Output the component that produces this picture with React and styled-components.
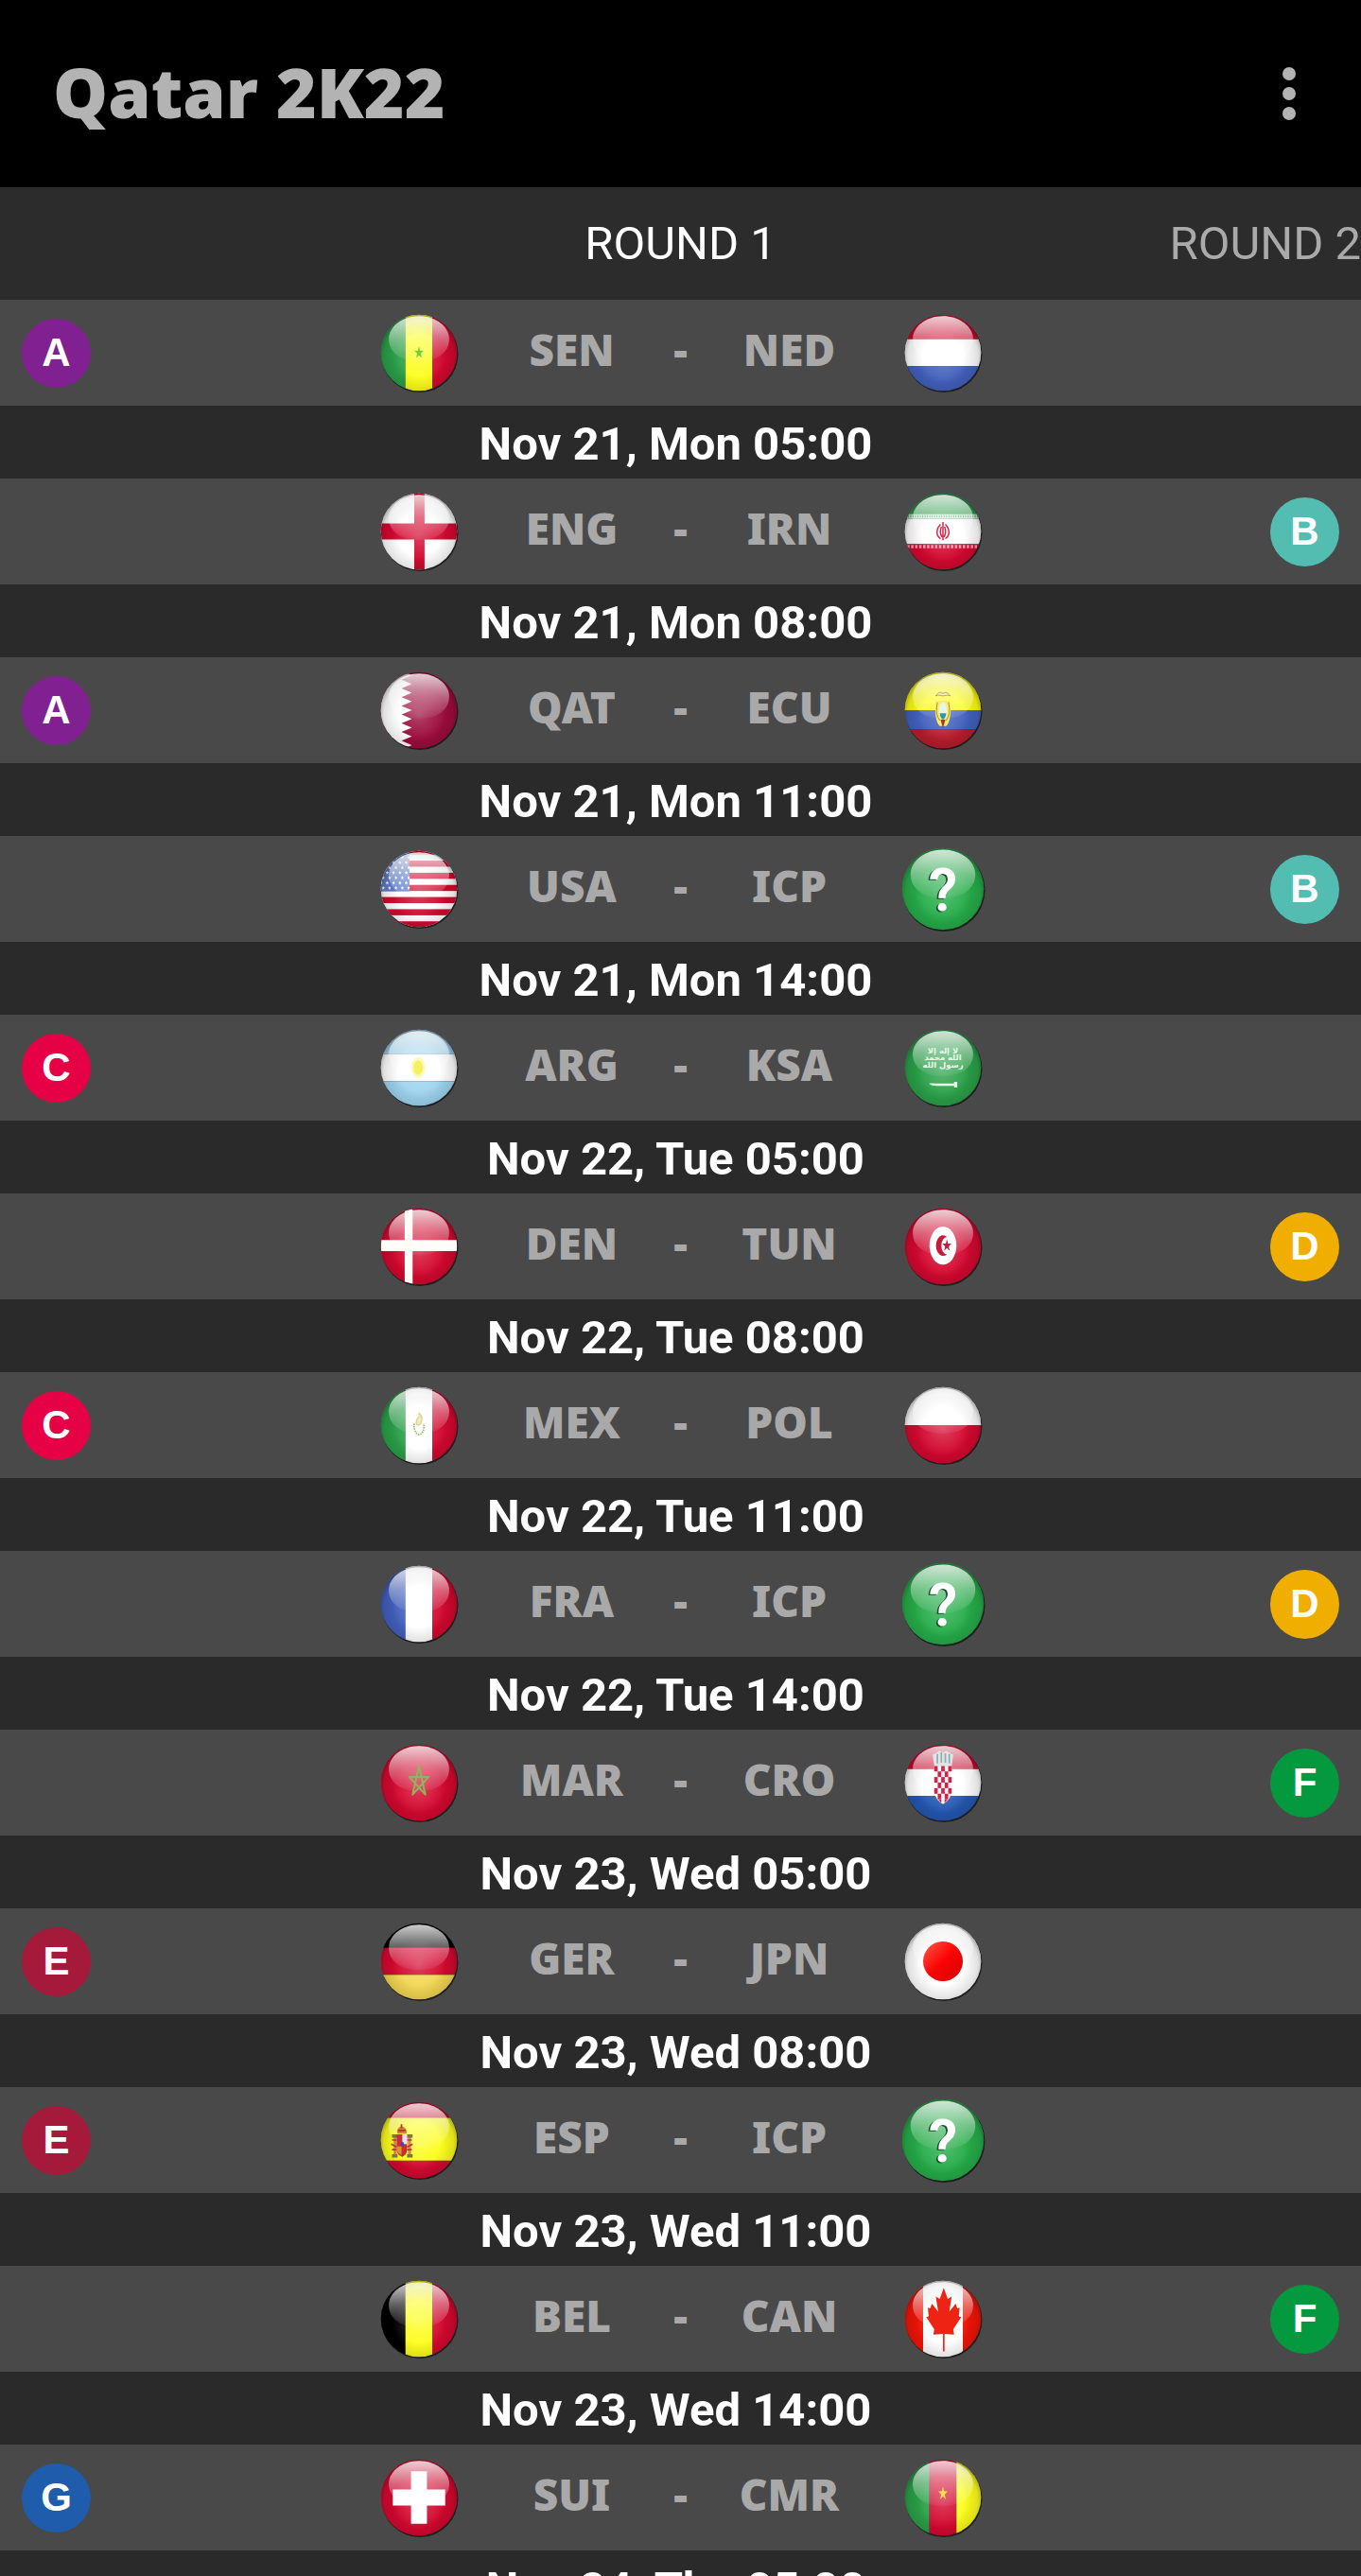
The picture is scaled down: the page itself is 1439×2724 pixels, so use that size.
import React, { useState } from 'react'
import styled, { createGlobalStyle } from 'styled-components'

const RED = '#d3082f'
const GREEN = '#2aa048'
const YELLOW = '#fdfd1c'
const BLUE = '#4260bd'

const groupColors = {
  A: '#812090',
  B: '#54bdb2',
  C: '#e60046',
  D: '#efae00',
  E: '#a51a3a',
  F: '#04993f',
  G: '#1f5cab',
}

const rounds = ['ROUND 1', 'ROUND 2']

const matches = [
  { group: 'A', side: 'left', home: 'SEN', away: 'NED', date: 'Nov 21, Mon 05:00' },
  { group: 'B', side: 'right', home: 'ENG', away: 'IRN', date: 'Nov 21, Mon 08:00' },
  { group: 'A', side: 'left', home: 'QAT', away: 'ECU', date: 'Nov 21, Mon 11:00' },
  { group: 'B', side: 'right', home: 'USA', away: 'ICP', date: 'Nov 21, Mon 14:00' },
  { group: 'C', side: 'left', home: 'ARG', away: 'KSA', date: 'Nov 22, Tue 05:00' },
  { group: 'D', side: 'right', home: 'DEN', away: 'TUN', date: 'Nov 22, Tue 08:00' },
  { group: 'C', side: 'left', home: 'MEX', away: 'POL', date: 'Nov 22, Tue 11:00' },
  { group: 'D', side: 'right', home: 'FRA', away: 'ICP', date: 'Nov 22, Tue 14:00' },
  { group: 'F', side: 'right', home: 'MAR', away: 'CRO', date: 'Nov 23, Wed 05:00' },
  { group: 'E', side: 'left', home: 'GER', away: 'JPN', date: 'Nov 23, Wed 08:00' },
  { group: 'E', side: 'left', home: 'ESP', away: 'ICP', date: 'Nov 23, Wed 11:00' },
  { group: 'F', side: 'right', home: 'BEL', away: 'CAN', date: 'Nov 23, Wed 14:00' },
  { group: 'G', side: 'left', home: 'SUI', away: 'CMR', date: 'Nov 24, Thu 05:00' },
]

// five pointed star, alternating outer and inner points
const star = (cx, cy, rx, ry, inner = 0.4) =>
  Array.from({ length: 10 }, (_, i) => {
    const a = (Math.PI / 5) * i - Math.PI / 2
    const k = i % 2 ? inner : 1
    return `${cx + Math.cos(a) * rx * k},${cy + Math.sin(a) * ry * k}`
  }).join(' ')

const Horizontal = ({ colors, stops = [-17, 17] }) => {
  const edges = [-50, ...stops, 50]
  return colors.map((c, i) => (
    <rect key={i} x="-50" y={edges[i]} width="100" height={edges[i + 1] - edges[i]} fill={c} />
  ))
}

const Vertical = ({ colors, stops = [-17, 17] }) => {
  const edges = [-50, ...stops, 50]
  return colors.map((c, i) => (
    <rect key={i} x={edges[i]} y="-50" width={edges[i + 1] - edges[i]} height="100" fill={c} />
  ))
}

const Field = ({ color }) => <rect x="-50" y="-50" width="100" height="100" fill={color} />

const teeth = [-44, -33, -22, -11, 0, 11, 22, 33, 44]

// the drawing under the gloss, and the emblem that lies over it
const flags = {
  SEN: {
    base: <Vertical colors={[GREEN, YELLOW, RED]} />,
    top: <polygon points={star(0, 0, 6, 8)} fill="#6fd23c" />,
  },
  NED: { base: <Horizontal colors={[RED, '#fff', BLUE]} /> },
  ENG: {
    base: (
      <>
        <Field color="#fff" />
        <path d="M-6-50h13v40h43v20H7v40H-6V10h-44v-20h44z" fill={RED} />
      </>
    ),
  },
  IRN: {
    base: (
      <>
        <Horizontal colors={[GREEN, '#c9f0d2', '#fff', RED]} stops={[-22, -16, 16]} />
        <path d="M-50-19H50" stroke="#3aa65a" strokeWidth="3" strokeDasharray="1 2" />
        <path d="M-50 19H50" stroke="#fff" strokeWidth="4" strokeDasharray="3 2" opacity="0.6" />
      </>
    ),
    top: (
      <g fill="none" stroke="#d8284a" strokeWidth="1.8">
        <path d="M0-12v23M-3-9c-6 6-6 14 0 18M3-9c6 6 6 14 0 18M-2-6c-2 5-2 9 1 13M2-6c2 5 2 9-1 13" />
      </g>
    ),
  },
  QAT: {
    base: (
      <>
        <Field color="#9c0c3c" />
        <path
          d={`M-50-50H-22${teeth.map((y) => `L-22 ${y - 5.5}L-9 ${y}L-22 ${y + 5.5}`).join('')}V50H-50z`}
          fill="#fff"
        />
      </>
    ),
  },
  ECU: {
    base: <Horizontal colors={['#fdfb12', BLUE, '#b81c2c']} stops={[0, 24]} />,
    top: (
      <g>
        <path d="M-9-12C-11 0-9 16-4 20h8c5-4 7-20 5-32z" fill="#f6ee6a" />
        <ellipse cx="0" cy="1" rx="5" ry="11" fill="#e6f3ea" />
        <path d="M-4 4h8c0 4-2 7-4 8-2-1-4-4-4-8z" fill="#3b8fae" />
        <path
          d="M-9-18c3-5 6-5 9-3 3-2 6-2 9 3-4-2-6 0-9 0s-5-2-9 0z"
          fill="#f6eec0"
          stroke="#a8965a"
          strokeWidth="1"
        />
        <path d="M-7-10c-2 9-1 18 3 23M7-10c2 9 1 18-3 23" fill="none" stroke="#b58d28" strokeWidth="1.2" />
        <path d="M-3 12l3 11 3-11z" fill="#a83838" />
      </g>
    ),
  },
  USA: {
    base: (
      <>
        <Field color="#fff" />
        {[0, 1, 2, 3, 4, 5, 6].map((i) => (
          <rect key={i} x="-50" y={-51 + i * 15.3} width="100" height="7.7" fill={RED} />
        ))}
        <rect x="-50" y="-50" width="38" height="53" fill="#5b7cc8" />
        {[0, 1, 2, 3, 4, 5, 6, 7].map((r) =>
          [0, 1, 2, 3, 4].map((c) => (
            <polygon
              key={`${r}-${c}`}
              points={star(-48 + c * 8 + (r % 2) * 3, -46 + r * 6.4, 2.2, 2.6, 0.45)}
              fill="#fff"
            />
          ))
        )}
      </>
    ),
  },
  ARG: {
    base: <Horizontal colors={['#9fd4f0', '#fff', '#9fd4f0']} />,
    top: (
      <>
        <ellipse cx="-1" cy="0" rx="9" ry="13" fill="#fcfab8" />
        <ellipse cx="-1" cy="0" rx="6" ry="9" fill="#f6f060" />
      </>
    ),
  },
  KSA: {
    base: <Field color={GREEN} />,
    top: (
      <g fill="#e9fbe9">
        <g fontFamily="'DejaVu Sans', sans-serif" fontWeight="700" fontSize="10" textAnchor="middle">
          <text y="-18">لا إله إلا</text>
          <text y="-9">الله محمد</text>
          <text y="0">رسول الله</text>
        </g>
        <path d="M-18 20q6-1 8 0h24v-2h4v7h-4v-2H-8q-6 0-10-3z" />
      </g>
    ),
  },
  DEN: {
    base: <Field color={RED} />,
    top: <path d="M-18-45l10-2V-8H48V6H-8V47l-10-2V6H-48V-8H-18z" fill="#fffdf8" />,
  },
  TUN: {
    base: <Field color={RED} />,
    top: (
      <>
        <ellipse cx="0" cy="-1" rx="17" ry="24" fill="#fff" />
        <path d="M5-12A9 13 0 1 0 5 10 7 11 0 1 1 5-12z" fill="#c9183a" />
        <polygon points={star(5, -1, 6, 8)} fill="#c9183a" />
      </>
    ),
  },
  MEX: {
    base: <Vertical colors={[GREEN, '#fff', RED]} />,
    top: (
      <g fill="none">
        <path d="M-1-15c5 2 6 8 3 13-3 3-6 2-5-3 0-3 2-3 3-6" fill="#f1ecc0" stroke="#e0d892" strokeWidth="2" />
        <path d="M-6-2c-1 8 2 13 6 14 5-1 7-6 6-14" stroke="#9cc06a" strokeWidth="2" strokeDasharray="2 1" />
      </g>
    ),
  },
  POL: { base: <Horizontal colors={['#fff', RED]} stops={[0]} /> },
  FRA: { base: <Vertical colors={[BLUE, '#fff', RED]} /> },
  MAR: {
    base: <Field color={RED} />,
    top: (
      <path
        d="M0-21L8 15-12-7H12L-8 15z"
        fill="none"
        stroke="#8fb45c"
        strokeWidth="2.4"
        strokeLinejoin="round"
      />
    ),
  },
  CRO: {
    base: <Horizontal colors={[RED, '#fff', '#2457b0']} />,
    top: (
      <g>
        <path d="M-11-21H11V8C11 18 6 24 0 27-6 24-11 18-11 8z" fill="#fff" />
        <g fill="#d91f45">
          {[0, 1, 2, 3, 4, 5].map((r) =>
            [0, 1, 2, 3, 4]
              .filter((c) => (r + c) % 2 === 0)
              .map((c) => <rect key={`${r}-${c}`} x={-11 + c * 4.4} y={-21 + r * 7} width="4.4" height="7" />)
          )}
          <path d="M-6 21h4v5zM2 21h4l-4 5z" />
        </g>
        <path d="M-13-35l4-2 4-3 5 2 5-2 4 3 4 2-2 14H-11z" fill="#dfe6e8" />
        <path d="M-7-36v12M-2-38v13M3-37v12M8-36v12" stroke="#93aab0" strokeWidth="2" />
      </g>
    ),
  },
  GER: { base: <Horizontal colors={['#000', RED, '#f2d653']} /> },
  JPN: {
    base: <Field color="#fff" />,
    top: <circle cx="0" cy="0" r="25" fill="url(#sun)" />,
  },
  ESP: {
    base: <Horizontal colors={[RED, YELLOW, RED]} stops={[-28, 26]} />,
    top: (
      <g>
        <path d="M-32-5h4v24h-4zM-14-5h4v24h-4z" fill="#c98a5c" />
        <path d="M-34-7h7v4h-7zM-15-7h7v4h-7zM-34 18h7v4h-7zM-15 18h7v4h-7z" fill="#7d7440" />
        <path d="M-35 5l7 4M-8 5l-7 4M-34 0h6M-15 0h6M-34 12h6M-15 12h6" stroke="#b8392c" strokeWidth="2" />
        <path d="M-28-7h13V12c0 5-3 8-6 9-4-1-7-4-7-9z" fill="#c8302e" />
        <path d="M-21-7h6V5h-6z" fill="#ecdcf0" />
        <path d="M-28 8h6v11c-4-2-6-4-6-7z" fill="#e28f32" />
        <ellipse cx="-21" cy="5" rx="2" ry="3" fill="#3747b8" />
        <path d="M-27-8c-2-6 2-9 5-9s8 3 6 9z" fill="#d77a3e" />
        <path d="M-22-20v5M-26-12h9" stroke="#a83b2b" strokeWidth="2" />
      </g>
    ),
  },
  BEL: { base: <Vertical colors={['#000', YELLOW, RED]} /> },
  CAN: {
    base: <Vertical colors={['#f01408', '#fff', '#f01408']} stops={[-25, 25]} />,
    top: (
      <path
        d="M1-39l5 14 5-3-3 19 8-10 2 6 3-1-1 11 3 1-10 15 1 7-12-1v22H0V19l-12 1 1-7-10-15 3-1-1-11 3 1 2-6 8 10-3-19 5 3z"
        fill="#ee2313"
      />
    ),
  },
  SUI: {
    base: <Field color={RED} />,
    top: <path d="M-10-33h20v23h23v20H10v23h-20V10h-23v-20h23z" fill="#fff" />,
  },
  CMR: {
    base: <Vertical colors={[GREEN, RED, YELLOW]} />,
    top: <polygon points={star(0, -5, 6, 9)} fill="#f3e04a" />,
  },
  ICP: {
    large: true,
    base: <Field color="#26ac49" />,
    top: (
      <g fontFamily="Roboto, sans-serif" fontWeight="600" fontSize="69" textAnchor="middle">
        <text x="-2" y="27" fill="#17502a">
          ?
        </text>
        <text x="0" y="25" fill="#fff">
          ?
        </text>
      </g>
    ),
  },
}

function SharedGradients() {
  return (
    <HiddenSvg aria-hidden="true">
      <defs>
        <clipPath id="disc">
          <circle r="48" />
        </clipPath>
        <radialGradient id="glow" cx="0.5" cy="0.56" r="0.5">
          <stop offset="0" stopColor="#fff" stopOpacity="0.22" />
          <stop offset="0.7" stopColor="#fff" stopOpacity="0" />
        </radialGradient>
        <radialGradient id="edge" cx="0.5" cy="0.54" r="0.54">
          <stop offset="0.5" stopColor="#000" stopOpacity="0" />
          <stop offset="0.85" stopColor="#000" stopOpacity="0.12" />
          <stop offset="1" stopColor="#000" stopOpacity="0.36" />
        </radialGradient>
        <linearGradient id="gloss" x1="0" y1="0" x2="0" y2="1">
          <stop offset="0" stopColor="#fff" stopOpacity="0.8" />
          <stop offset="0.5" stopColor="#fff" stopOpacity="0.38" />
          <stop offset="1" stopColor="#fff" stopOpacity="0.04" />
        </linearGradient>
        <linearGradient id="sun" x1="0" y1="0" x2="1" y2="1">
          <stop offset="0" stopColor="#ff5a48" />
          <stop offset="0.5" stopColor="#fb0404" />
          <stop offset="1" stopColor="#d00000" />
        </linearGradient>
      </defs>
    </HiddenSvg>
  )
}

function Flag({ code }) {
  const { base, top, large } = flags[code]
  return (
    <FlagSvg viewBox="-50 -50 100 100" $large={large} role="img" aria-label={code}>
      <circle cx="1" cy="1.6" r="48.4" fill="#000" opacity="0.6" />
      <g clipPath="url(#disc)">
        {base}
        <circle r="48" fill="url(#glow)" />
        <circle r="48" fill="url(#edge)" />
        <path d="M-38-17C-38-33-21-46 0-46S38-33 38-17C38 0 22 11 0 11S-38 0-38-17z" fill="url(#gloss)" />
        {top}
      </g>
    </FlagSvg>
  )
}

function Match({ match }) {
  return (
    <li>
      <MatchRow>
        <BadgeSlot $side={match.side}>
          <Badge $group={match.group}>{match.group}</Badge>
        </BadgeSlot>
        <FlagSlot $column={2}>
          <Flag code={match.home} />
        </FlagSlot>
        <Team $column={3}>{match.home}</Team>
        <Team $column={4}>-</Team>
        <Team $column={5}>{match.away}</Team>
        <FlagSlot $column={6}>
          <Flag code={match.away} />
        </FlagSlot>
      </MatchRow>
      <MatchDate>{match.date}</MatchDate>
    </li>
  )
}

function App() {
  const [round, setRound] = useState(0)

  return (
    <Page>
      <GlobalStyle />
      <SharedGradients />
      <Header>
        <Title>Qatar 2K22</Title>
        <MenuButton aria-label="More options">
          <svg width="14" height="56" viewBox="0 0 14 56" fill="#b3b3b3">
            <circle cx="7" cy="7" r="7" />
            <circle cx="7" cy="28" r="7" />
            <circle cx="7" cy="49" r="7" />
          </svg>
        </MenuButton>
      </Header>
      <Tabs>
        {rounds.map((name, i) => (
          <Tab key={name} $active={i === round} $column={i + 2} onClick={() => setRound(i)}>
            {name}
          </Tab>
        ))}
      </Tabs>
      <MatchList>
        {matches.map((match) => (
          <Match key={match.home} match={match} />
        ))}
      </MatchList>
    </Page>
  )
}

const GlobalStyle = createGlobalStyle`
  * {
    box-sizing: border-box;
  }
  body {
    margin: 0;
    background-color: #2b2b2b;
    font-family: Roboto, sans-serif;
  }
`

const Page = styled.div`
  display: flex;
  flex-direction: column;
  height: 100vh;
  overflow: hidden;
`

const HiddenSvg = styled.svg`
  position: absolute;
  width: 0;
  height: 0;
`

const Header = styled.header`
  display: flex;
  flex-shrink: 0;
  justify-content: space-between;
  align-items: center;
  height: 198px;
  padding: 0 48px 0 56px;
  background-color: #000;
`

const Title = styled.h1`
  margin: 0;
  padding-bottom: 6px;
  color: #b3b3b3;
  font-family: 'Noto Sans', sans-serif;
  font-size: 73px;
  font-weight: 900;
  white-space: nowrap;
`

const MenuButton = styled.button`
  display: flex;
  justify-content: center;
  align-items: center;
  width: 56px;
  height: 96px;
  padding: 0;
  border: none;
  background: none;
  cursor: pointer;
`

const Tabs = styled.nav`
  display: grid;
  flex-shrink: 0;
  grid-template-columns: 1fr auto 1fr;
  align-items: center;
  height: 119px;
  background-color: #2c2c2c;
`

const Tab = styled.button`
  grid-column: ${(props) => props.$column};
  justify-self: end;
  padding: 0;
  border: none;
  background: none;
  color: ${(props) => (props.$active ? '#fff' : '#aaa')};
  font-family: Roboto, sans-serif;
  font-size: 49px;
  white-space: nowrap;
  cursor: pointer;
`

const MatchList = styled.ul`
  flex: 1;
  min-height: 0;
  margin: 0;
  padding: 0;
  overflow-y: auto;
  scrollbar-width: none;
  list-style: none;
`

const MatchRow = styled.div`
  display: grid;
  grid-template-columns: 1fr 194px 130px 100px 130px 194px 1fr;
  align-items: center;
  height: 112px;
  padding: 0 23px;
  background-color: #494949;
`

const BadgeSlot = styled.div`
  grid-row: 1;
  grid-column: ${(props) => (props.$side === 'left' ? 1 : 7)};
  justify-self: ${(props) => (props.$side === 'left' ? 'start' : 'end')};
`

const Badge = styled.div`
  display: flex;
  justify-content: center;
  align-items: center;
  width: 73px;
  height: 73px;
  border-radius: 50%;
  background-color: ${(props) => groupColors[props.$group]};
  color: #fff;
  font-family: 'Liberation Sans', sans-serif;
  font-size: 42px;
  font-weight: 700;
`

const FlagSlot = styled.div`
  display: flex;
  grid-row: 1;
  grid-column: ${(props) => props.$column};
  justify-content: center;
`

const FlagSvg = styled.svg`
  display: block;
  width: ${(props) => (props.$large ? 90 : 84)}px;
  height: ${(props) => (props.$large ? 90 : 84)}px;
`

const Team = styled.div`
  grid-row: 1;
  grid-column: ${(props) => props.$column};
  padding-bottom: 8px;
  color: #a9a9a9;
  font-family: 'Noto Sans', sans-serif;
  font-size: 46px;
  font-weight: 900;
  text-align: center;
`

const MatchDate = styled.div`
  height: 77px;
  padding: 2px 10px 0 0;
  background-color: #2a2a2a;
  color: #fff;
  font-size: 49px;
  font-weight: 700;
  line-height: 77px;
  text-align: center;
`

export default App
